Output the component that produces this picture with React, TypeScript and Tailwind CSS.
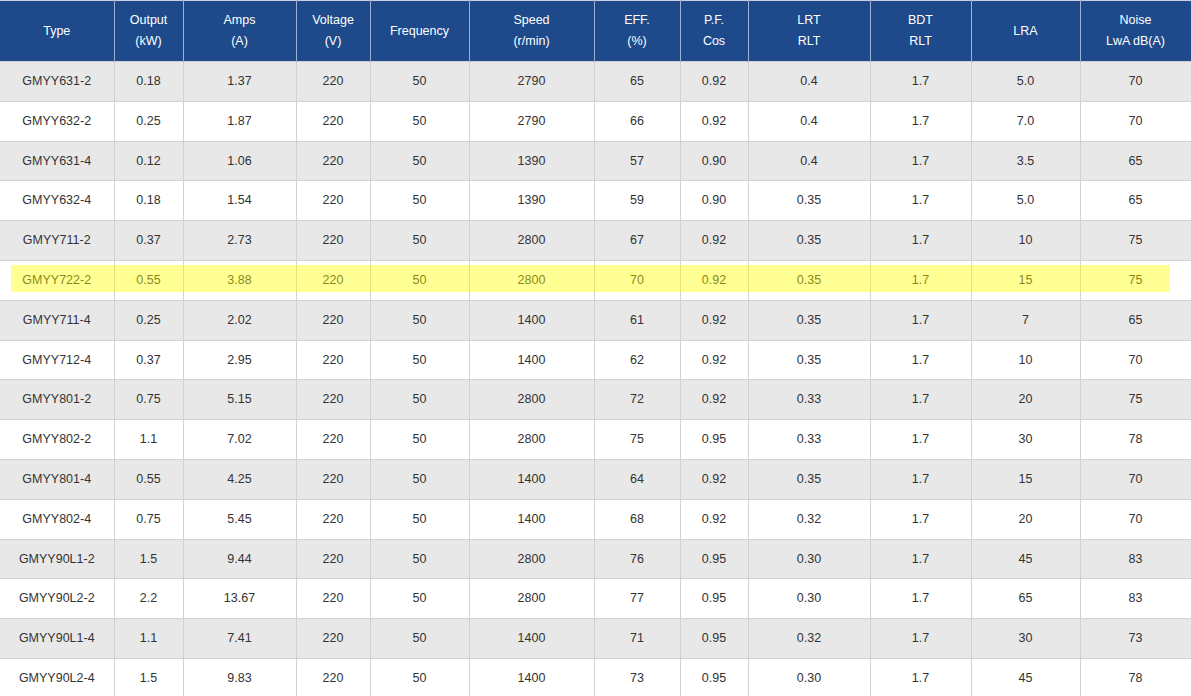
const headers: string[][] = [
  ["Type"],
  ["Output", "(kW)"],
  ["Amps", "(A)"],
  ["Voltage", "(V)"],
  ["Frequency"],
  ["Speed", "(r/min)"],
  ["EFF.", "(%)"],
  ["P.F.", "Cos"],
  ["LRT", "RLT"],
  ["BDT", "RLT"],
  ["LRA"],
  ["Noise", "LwA dB(A)"],
];

const widths = [114, 69, 113, 74, 99, 125, 86, 68, 122, 101, 109, 111];

const rows: string[][] = [
  ["GMYY631-2", "0.18", "1.37", "220", "50", "2790", "65", "0.92", "0.4", "1.7", "5.0", "70"],
  ["GMYY632-2", "0.25", "1.87", "220", "50", "2790", "66", "0.92", "0.4", "1.7", "7.0", "70"],
  ["GMYY631-4", "0.12", "1.06", "220", "50", "1390", "57", "0.90", "0.4", "1.7", "3.5", "65"],
  ["GMYY632-4", "0.18", "1.54", "220", "50", "1390", "59", "0.90", "0.35", "1.7", "5.0", "65"],
  ["GMYY711-2", "0.37", "2.73", "220", "50", "2800", "67", "0.92", "0.35", "1.7", "10", "75"],
  ["GMYY722-2", "0.55", "3.88", "220", "50", "2800", "70", "0.92", "0.35", "1.7", "15", "75"],
  ["GMYY711-4", "0.25", "2.02", "220", "50", "1400", "61", "0.92", "0.35", "1.7", "7", "65"],
  ["GMYY712-4", "0.37", "2.95", "220", "50", "1400", "62", "0.92", "0.35", "1.7", "10", "70"],
  ["GMYY801-2", "0.75", "5.15", "220", "50", "2800", "72", "0.92", "0.33", "1.7", "20", "75"],
  ["GMYY802-2", "1.1", "7.02", "220", "50", "2800", "75", "0.95", "0.33", "1.7", "30", "78"],
  ["GMYY801-4", "0.55", "4.25", "220", "50", "1400", "64", "0.92", "0.35", "1.7", "15", "70"],
  ["GMYY802-4", "0.75", "5.45", "220", "50", "1400", "68", "0.92", "0.32", "1.7", "20", "70"],
  ["GMYY90L1-2", "1.5", "9.44", "220", "50", "2800", "76", "0.95", "0.30", "1.7", "45", "83"],
  ["GMYY90L2-2", "2.2", "13.67", "220", "50", "2800", "77", "0.95", "0.30", "1.7", "65", "83"],
  ["GMYY90L1-4", "1.1", "7.41", "220", "50", "1400", "71", "0.95", "0.32", "1.7", "30", "73"],
  ["GMYY90L2-4", "1.5", "9.83", "220", "50", "1400", "73", "0.95", "0.30", "1.7", "45", "78"],
];

export default function App() {
  return (
    <div className="relative h-[696px] w-[1191px] overflow-hidden bg-white font-['Liberation_Sans',Arial,sans-serif] text-[12.5px]">
      <table className="w-[1191px] table-fixed border-collapse">
        <colgroup>
          {widths.map((w, i) => (
            <col key={i} style={{ width: w }} />
          ))}
        </colgroup>
        <thead>
          <tr className="h-[61px] bg-[#1e4a8b] text-white">
            {headers.map((h, i) => (
              <th
                key={i}
                className="border-x border-t border-t-[#c9d2e2] border-x-[#9fb1d0] p-0 text-center font-normal leading-[21px] first:border-l-0"
              >
                {h.map((line, j) => (
                  <div key={j}>{line}</div>
                ))}
              </th>
            ))}
          </tr>
        </thead>
        <tbody>
          {rows.map((r, i) => (
            <tr key={i} className={`h-[39.8px] ${i % 2 === 0 ? "bg-[#e8e8e8]" : "bg-white"}`}>
              {r.map((c, j) => (
                <td
                  key={j}
                  className="border border-[#d2d2d2] p-0 text-center text-[#333333] first:border-l-0"
                >
                  {c}
                </td>
              ))}
            </tr>
          ))}
        </tbody>
      </table>

      {/* highlighter mark over the GMYY722-2 row */}
      <div className="pointer-events-none absolute left-[11px] top-[265px] h-[27px] w-[1159px] bg-[rgba(255,255,0,0.42)]" />
    </div>
  );
}
